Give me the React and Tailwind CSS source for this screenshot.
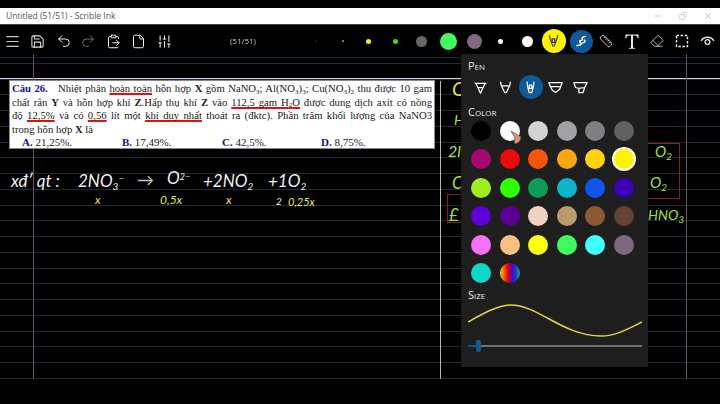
import React from "react";
import { Menu, Save, Undo2, Redo2, ClipboardPaste, File, SlidersVertical, Ruler, Eraser, Minus, X, Copy } from "lucide-react";

const swatches = [
  ["bg-[#000000]", "bg-[#ffffff]", "bg-[#d2d3d5]", "bg-[#a1a2a6]", "bg-[#7e7f83]", "bg-[#5e6062]"],
  ["bg-[#a8076f]", "bg-[#e80b0b]", "bg-[#f2550c]", "bg-[#f9a70d]", "bg-[#ffd10f]", "bg-[#fff200] ring-2 ring-white"],
  ["bg-[#a0f020]", "bg-[#2fff00]", "bg-[#0f9a5a]", "bg-[#0fb3cc]", "bg-[#0f55e8]", "bg-[#3a00b8]"],
  ["bg-[#6000d8]", "bg-[#5a0090]", "bg-[#f0d3c0]", "bg-[#bc9a6c]", "bg-[#8c5a32]", "bg-[#644232]"],
  ["bg-[#f870f8]", "bg-[#fbc080]", "bg-[#ffff10]", "bg-[#40f860]", "bg-[#40ffff]", "bg-[#806880]"],
  ["bg-[#10d8c8]", "bg-[linear-gradient(90deg,#ffe000,#f06000,#e00000,#5000c0,#1040d0,#30a070)]"],
];

const Pen = ({ v = 0 }) => (
  <svg width="15" height="15" viewBox="0 0 18 18" fill="none" stroke="white" strokeWidth="1.5" strokeLinejoin="round">
    {v === 0 && <path d="M2 4 L16 4 M3.5 4 L9 16 L14.5 4 M6 9 L12 9" />}
    {v === 1 && <path d="M3 2 L4 7 L8 15 L10 15 L14 7 L15 2 M4 7 L14 7" />}
    {v === 2 && <path d="M5 2 L5.5 8 L7.5 15 L10.5 15 L12.5 8 L13 2 M7.5 6 L10.5 6 L10.5 10 L7.5 10 Z" />}
    {v === 3 && <path d="M1 3 L17 3 L14 11 L9 15 L5 12 L3 8 Z M3 8 L14 8" />}
    {v === 4 && <path d="M1 3 L17 3 L14 9 L12 15 L7 15 L7 10 L3 9 Z M7 10 L14 9" />}
  </svg>
);

const Dot = ({ cls }) => (
  <div className="w-[26.4px] h-full flex items-center justify-center shrink-0">
    <div className={"rounded-full " + cls} />
  </div>
);

const Slot = ({ children, w = "w-[25.5px]" }) => (
  <div className={w + " h-full flex items-center justify-center shrink-0 text-white"}>{children}</div>
);

const Ink = ({ x, y, cls = "text-[#f0f0f0]", size = "text-[17px]", children }) => (
  <div
    className={"absolute whitespace-nowrap leading-none italic font-normal [font-family:Lato,'Noto_Sans',sans-serif] " + size + " " + cls}
    style={{ left: x, top: y - 57 }}
  >
    {children}
  </div>
);

const Line = ({ children }) => (
  <div className="[text-align:justify] [text-align-last:justify] h-[13.6px]">{children}</div>
);

const B = ({ children }) => <b className="text-[#10108c]">{children}</b>;
const U = ({ children }) => (
  <span className="underline decoration-[#e01010] decoration-[1.5px] underline-offset-[1px] [text-decoration-skip-ink:none]">{children}</span>
);
const S = ({ children }) => <sub className="text-[7px] leading-none">{children}</sub>;

export default function App() {
  return (
    <div className="relative w-[720px] h-[404px] bg-black overflow-hidden flex flex-col pt-2 [font-family:'Open_Sans','Noto_Sans',sans-serif]">
      {/* Title bar */}
      <div className="h-[17px] bg-white flex items-center shrink-0 border-b border-[#444]">
        <div className="pl-[6px] text-[8.5px] text-[#555] flex-1">Untitled (51/51) - Scrible Ink</div>
        <div className="flex items-center text-[#777] pr-[7px] gap-[15px]">
          <Minus size={10} strokeWidth={1} />
          <Copy size={8} strokeWidth={1} className="-scale-x-100 mx-[1px]" />
          <X size={10} strokeWidth={1} />
        </div>
      </div>

      {/* Toolbar */}
      <div className="h-[32px] shrink-0 flex items-center bg-black relative z-10">
        <Slot w="w-[24px]"><Menu size={17} strokeWidth={1.7} className="text-[#c8c8c8]" /></Slot>
        <Slot w="w-[27px]"><Save size={15} strokeWidth={1.7} className="text-[#e0e0e0]" /></Slot>
        <Slot w="w-[25px]"><Undo2 size={16} strokeWidth={1.5} className="text-[#f0f0f0]" /></Slot>
        <Slot w="w-[24px]"><Redo2 size={16} strokeWidth={1.5} className="text-[#707070]" /></Slot>
        <Slot w="w-[26px]"><ClipboardPaste size={15} strokeWidth={1.6} className="text-[#f0f0f0]" /></Slot>
        <Slot w="w-[25px]"><File size={15} strokeWidth={1.6} className="text-[#f0f0f0]" /></Slot>
        <Slot w="w-[27px]"><SlidersVertical size={15} strokeWidth={1.7} className="text-[#f0f0f0]" /></Slot>
        <div className="w-[125px] shrink-0 text-left text-[8px] text-[#c8c8c8] pl-[52px]">(51/51)</div>
        <Dot cls="w-[2px] h-[2px] bg-[#1a1a70]" />
        <Dot cls="w-[2px] h-[2px] bg-[#a0a0a0]" />
        <Dot cls="w-[5px] h-[5px] bg-[#fff200]" />
        <Dot cls="w-[5px] h-[5px] bg-[#40e010]" />
        <Dot cls="w-[11px] h-[11px] bg-[#666868]" />
        <Dot cls="w-[17px] h-[17px] bg-[#40f860]" />
        <Dot cls="w-[15px] h-[15px] bg-[#806880]" />
        <Dot cls="w-[5px] h-[5px] bg-white" />
        <Dot cls="w-[11px] h-[11px] bg-white" />
        <div className="w-[26.4px] h-full flex items-center justify-center shrink-0">
          <div className="w-[24px] h-[24px] shrink-0 rounded-full bg-[#fff200] flex items-center justify-center">
            <svg width="13" height="14" viewBox="0 0 18 18" fill="none" stroke="#333" strokeWidth="1.5">
              <path d="M3 1 L5 8 L8 16 L10 16 L13 8 L15 1 M7 6 L11 6 L10.5 11 L7.5 11 Z" />
            </svg>
          </div>
        </div>
        <div className="w-[30px] h-full flex items-center justify-center shrink-0">
          <div className="w-[23px] h-[23px] shrink-0 rounded-full bg-[#0f5a96] flex items-center justify-center">
            <svg width="13" height="14" viewBox="0 0 14 14" fill="none" stroke="white" strokeWidth="1.5" strokeLinecap="round">
              <path d="M2 12 L6 11 C9 10 4 9 5 7 C6 6 8 7 8 5 C8 4 7 4 8 3 L11 2 M10 6 C12 7 10 9 8 9" />
            </svg>
          </div>
        </div>
        <Slot w="w-[19px]"><Ruler size={14} strokeWidth={1.5} className="text-[#e8e8e8]" /></Slot>
        <Slot w="w-[32px]">
          <svg width="14" height="15" viewBox="0 0 14 15" fill="#e8e8e8">
            <path d="M0.5 0.5 H13.5 V4.5 H12.8 C12.6 2.4 11.5 1.5 9.5 1.5 H8 V12.8 C8 13.8 8.8 14 10 14 V14.7 H4 V14 C5.2 14 6 13.8 6 12.8 V1.5 H4.5 C2.5 1.5 1.4 2.4 1.2 4.5 H0.5 Z" />
          </svg>
        </Slot>
        <Slot w="w-[18px]"><Eraser size={14} strokeWidth={1.3} className="text-[#e8e8e8]" /></Slot>
        <Slot w="w-[32px]">
          <svg width="14" height="14" viewBox="0 0 14 14" fill="none" stroke="#f0f0f0" strokeWidth="1.4" strokeDasharray="2.5 1.6">
            <rect x="1.5" y="1.5" width="11" height="11" />
          </svg>
        </Slot>
        <Slot w="w-[20px]">
          <svg width="15" height="12" viewBox="0 0 15 12" fill="none" stroke="#e8e8e8" strokeWidth="1.3">
            <path d="M1 6 C4 1 11 1 14 6" />
            <circle cx="7.5" cy="7" r="2.4" />
          </svg>
        </Slot>
      </div>

      {/* Canvas */}
      <div className="relative flex-1 border-t border-[#16222e]">
        <div className="absolute left-0 right-0 top-[5px] h-[317px] bg-[repeating-linear-gradient(180deg,#1a2a3a_0px,#1a2a3a_1px,transparent_1px,transparent_15.75px)]" />
        <div className="absolute top-[-4px] left-[33px] w-[1px] h-[325px] bg-[#6a5060] z-20" />
        <div className="absolute top-[-4px] left-[686px] w-[1px] h-[325px] bg-[#6a5060] z-20" />
        <div className="absolute top-[20px] left-0 right-0 h-[1px] bg-[#d8d8d8]" />
        <div className="absolute top-[23px] left-[440px] w-[1px] h-[298px] bg-[#b8b8b8]" />

        {/* Question card */}
        <div className="absolute z-30 left-[9px] top-[22px] w-[426px] h-[69px] bg-white border border-[#888] px-[2px] pt-[1px] text-[10.7px] leading-[13.6px] text-[#1a1a1a] [font-family:'Liberation_Serif',serif]">
          <Line>
            <B>Câu 26.</B>&nbsp;&nbsp;&nbsp;Nhiệt phân <U>hoàn toàn</U> hỗn hợp <b>X</b> gồm NaNO<S>3</S>; Al(NO<S>3</S>)<S>3</S>; Cu(NO<S>3</S>)<S>2</S> thu được 10 gam
          </Line>
          <Line>
            chất rắn <b>Y</b> và hỗn hợp khí <b>Z</b>.Hấp thụ khí <b>Z</b> vào <U>112,5 gam H<S>2</S>O</U> được dung dịch axit có nồng
          </Line>
          <Line>
            độ <U>12,5%</U> và có <U>0,56</U> lít một <U>khí duy nhất</U> thoát ra (đktc). Phần trăm khối lượng của NaNO3
          </Line>
          <div className="h-[13.6px]">trong hỗn hợp <b>X</b> là</div>
          <div className="h-[13.6px] flex pl-[10px] text-[11px]">
            <div className="w-[100px]"><B>A.</B> 21,25%.</div>
            <div className="w-[100px]"><B>B.</B> 17,49%.</div>
            <div className="w-[99px]"><B>C.</B> 42,5%.</div>
            <div><B>D.</B> 8,75%.</div>
          </div>
        </div>

        {/* Handwriting */}
        <Ink x={11} y={171}>xđ′ qt :</Ink>
        <Ink x={78} y={171}>2NO<sub className="text-[10px]">3</sub><sup className="text-[10px]">−</sup></Ink>
        <Ink x={137} y={170} cls="text-[#c8c8c8]">→</Ink>
        <Ink x={167} y={168}>O<sup className="text-[9px]">2−</sup></Ink>
        <Ink x={203} y={171}>+2NO<sub className="text-[10px]">2</sub></Ink>
        <Ink x={268} y={171}>+1O<sub className="text-[10px]">2</sub></Ink>
        <Ink x={95} y={193} cls="text-[#f0e840] font-bold" size="text-[12px]">x</Ink>
        <Ink x={160} y={193} cls="text-[#f0e840] font-bold" size="text-[12px]">0,5x</Ink>
        <Ink x={226} y={193} cls="text-[#f0e840] font-bold" size="text-[12px]">x</Ink>
        <Ink x={276} y={195} size="text-[10px]">2</Ink>
        <Ink x={288} y={195} cls="text-[#f0e840] font-bold" size="text-[11px]">0,25x</Ink>

        <Ink x={452} y={77} cls="text-[#e8e040]" size="text-[20px]">C</Ink>
        <Ink x={454} y={112} cls="text-[#a8e030]" size="text-[14px]">H</Ink>
        <Ink x={448} y={142} cls="text-[#a8e030]" size="text-[16px]">2l</Ink>
        <Ink x={452} y={173} cls="text-[#a8e030]" size="text-[17px]">C</Ink>
        <Ink x={449} y={205} cls="text-[#a8e030]" size="text-[17px]">£</Ink>
        <Ink x={655} y={143} cls="text-[#a8e030]" size="text-[15px]">O<sub className="text-[10px]">2</sub></Ink>
        <Ink x={650} y={174} cls="text-[#a8e030]" size="text-[15px]">O<sub className="text-[10px]">2</sub></Ink>
        <Ink x={648} y={207} cls="text-[#a8e030]" size="text-[14px]">HNO<sub className="text-[10px]">3</sub></Ink>

        <div className="absolute left-[447px] top-[136px] w-[60px] h-[29px] border-[1.5px] border-[#901828]" />
        <div className="absolute left-[600px] top-[85px] w-[80px] h-[56px] border-[1.5px] border-[#901828]" />
      </div>

      {/* Pen flyout */}
      <div className="absolute z-10 left-[461px] top-[54px] w-[187px] h-[313px] bg-[#1e1e1e] px-[7px] pt-[6px] text-[#e8e8e8]">
        <div className="text-[11px] leading-[12px] [font-variant:small-caps]">Pen</div>
        <div className="flex items-center h-[24px] mt-[3px]">
          {[0, 1, 2, 3, 4].map((v) => (
            <div key={v} className="w-[25px] h-[24px] flex items-center justify-center shrink-0">
              {v === 2 ? (
                <div className="w-[24px] h-[24px] rounded-full bg-[#0f5a96] shrink-0 flex items-center justify-center">
                  <Pen v={v} />
                </div>
              ) : (
                <Pen v={v} />
              )}
            </div>
          ))}
        </div>
        <div className="text-[11px] leading-[12px] [font-variant:small-caps] mt-[7px]">Color</div>
        <div className="mt-[3px] flex flex-col gap-[8.4px] pl-[3px]">
          {swatches.map((row, i) => (
            <div key={i} className="flex gap-[8.5px]">
              {row.map((c, j) => (
                <div key={j} className={"w-[20px] h-[20px] rounded-full shrink-0 " + c} />
              ))}
            </div>
          ))}
        </div>
        <div className="text-[11px] leading-[12px] [font-variant:small-caps] mt-[6px]">Size</div>
        <svg width="174" height="36" viewBox="0 0 174 36" fill="none" className="mt-[1px] block">
          <path d="M0 20 C14 12 30 3 43 3 C70 3 95 34 133 34 C148 34 162 26 174 20" stroke="#e0d840" strokeWidth="1.5" />
        </svg>
        <div className="relative h-[12px] mt-[2px] w-[174px] flex items-center">
          <div className="w-[10px] h-[2px] bg-[#0f5a96]" />
          <div className="flex-1 h-[2px] bg-[#707070]" />
          <div className="absolute left-[8px] top-0 w-[5px] h-[12px] rounded-[2px] bg-[#0f5a96]" />
        </div>
      </div>

      {/* Hand cursor */}
      <svg width="12" height="14" viewBox="0 0 12 14" className="absolute z-20 left-[510px] top-[130px]">
        <path d="M1 1 L8 5 L11 7 L10 11 L6 14 L4 13 L5 8 Z" fill="#d89878" stroke="#5a3020" strokeWidth="0.6" />
      </svg>
    </div>
  );
}
